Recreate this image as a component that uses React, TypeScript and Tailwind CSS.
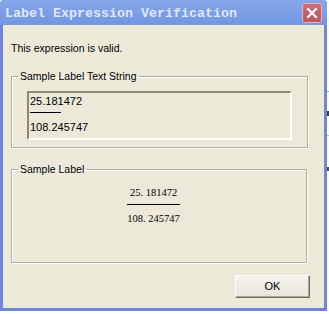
import React from "react";

const sans = { fontFamily: '"Liberation Sans", Arial, sans-serif' };

export default function App() {
  return (
    <div className="w-[329px] h-[314px] bg-white flex items-start" style={sans}>
      <div className="w-[327px] h-[311px] flex flex-col shrink-0">
        {/* Title bar */}
        <div className="h-[25px] flex items-start justify-between bg-gradient-to-b from-[#86a6ea] to-[#7396e2] rounded-t-[3px]">
          <div
            className="pl-[5px] pt-[6px] text-[13.33px] leading-[15px] font-bold text-[#dfe8fa] whitespace-nowrap"
            style={{ fontFamily: '"Liberation Mono", "Courier New", monospace' }}
          >
            Label Expression Verification
          </div>
          <div className="mt-[3px] mr-[5px] w-[20px] h-[20px] rounded-[3px] border border-[#e4b4bc] bg-gradient-to-b from-[#cd6d78] to-[#bb5561] flex items-center justify-center">
            <svg width="12" height="12" viewBox="0 0 12 12">
              <path d="M2 2 L10 10 M10 2 L2 10" stroke="#ffffff" strokeWidth="2.2" strokeLinecap="square" />
            </svg>
          </div>
        </div>
        {/* Body */}
        <div className="flex-1 flex flex-col bg-[#ece9d8] border-l-[3px] border-r-[3px] border-b-[3px] border-[#6f86d8] pl-[8px] pr-[16px] pt-[17px] text-[10.5px] leading-[13px] text-black">
          <div>This expression is valid.</div>

          <fieldset className="mt-[15px] border border-[#b3b0a2] shadow-[inset_1px_1px_0_#fff,1px_1px_0_#fff] pb-[7px]">
            <legend className="ml-[6px] px-[2px] leading-[13px]">Sample Label Text String</legend>
            <div className="mt-[8px] mx-[15px] h-[49px] border-2 border-t-[#8a877b] border-l-[#8a877b] border-b-white border-r-white pl-[1px] pt-[2px] text-[11px]">
              <div>25.181472</div>
              <div className="mt-[4px] w-[31px] h-[1px] bg-black" />
              <div className="mt-[8px]">108.245747</div>
            </div>
          </fieldset>

          <fieldset className="mt-[15px] mr-[1px] h-[100px] border border-[#b3b0a2] shadow-[inset_1px_1px_0_#fff,1px_1px_0_#fff]">
            <legend className="ml-[6px] px-[2px] leading-[13px]">Sample Label</legend>
            <div
              className="mt-[11px] flex flex-col items-center pr-[11px] text-[10.5px] leading-[12px]"
              style={{ fontFamily: '"Liberation Serif", "Times New Roman", serif' }}
            >
              <div className="w-[53px] flex flex-col items-center">
                <div>25. 181472</div>
                <div className="mt-[5px] w-[53px] h-[1px] bg-black" />
                <div className="mt-[8px]">108. 245747</div>
              </div>
            </div>
          </fieldset>

          <div className="flex-1" />
          <div className="flex justify-end mb-[10px] mr-[-2px]">
            <button className="w-[75px] h-[23px] bg-gradient-to-b from-[#f4f3ee] to-[#e8e6da] border border-t-white border-l-white border-b-[#716f64] border-r-[#716f64] shadow-[inset_-1px_-1px_0_#aca899] text-[11px] leading-[13px] text-black">
              OK
            </button>
          </div>
        </div>
      </div>
      {/* Background strip to the right */}
      <div className="w-[2px] h-[314px] flex flex-col">
        <div className="h-[91px]" />
        <div className="h-[1px] bg-[#a0a0a0]" />
        <div className="h-[19px]" />
        <div className="h-[5px] bg-[#404040]" />
        <div className="h-[19px]" />
        <div className="h-[1px] bg-[#c0c0c0]" />
        <div className="h-[31px]" />
        <div className="h-[4px] bg-[#505050]" />
      </div>
    </div>
  );
}
